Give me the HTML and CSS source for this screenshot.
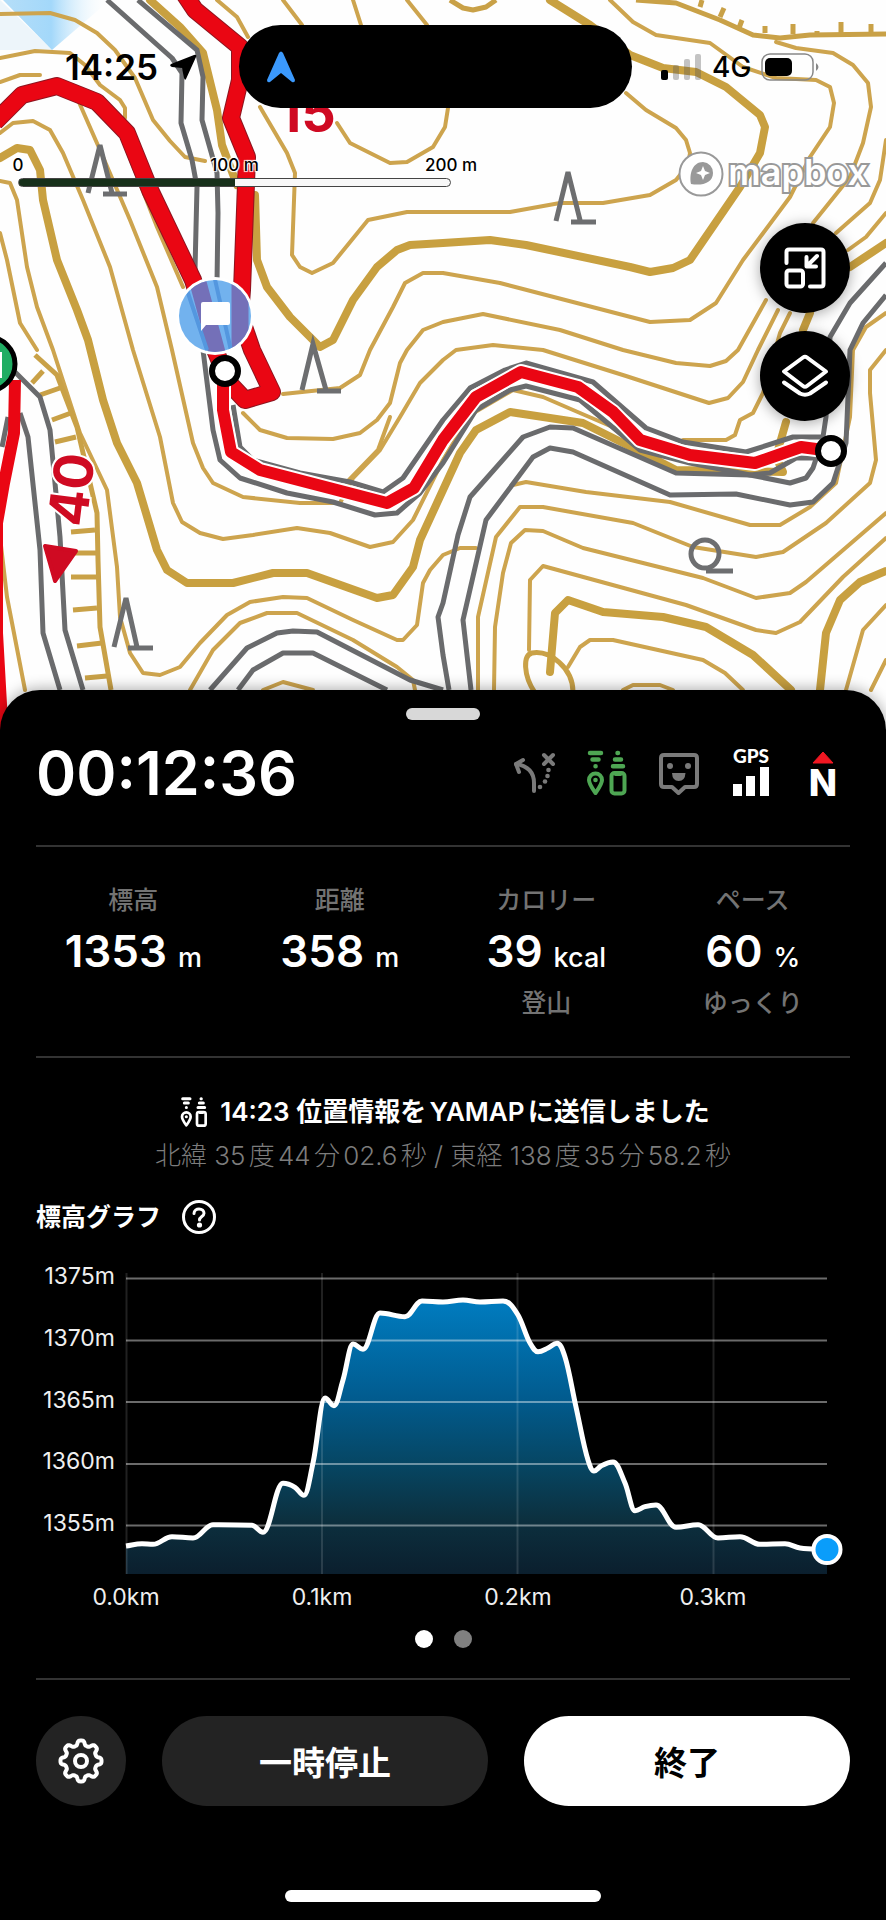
FILE: index.html
```html
<!DOCTYPE html>
<html lang="ja">
<head>
<meta charset="utf-8">
<meta name="viewport" content="width=device-width, initial-scale=1">
<title>活動記録</title>
<link rel="stylesheet" href="styles.css">
</head>
<body>
<main class="screen">
  <section class="map" aria-label="地図">
    <svg class="map-canvas" viewBox="0 0 886 730" preserveAspectRatio="xMidYMin slice" aria-hidden="true">
      <defs>
        <linearGradient id="haze" x1="0" y1="0" x2="1" y2="0">
          <stop offset="0" stop-color="#b5def8"/><stop offset="0.45" stop-color="#a3d8fa"/><stop offset="1" stop-color="#fff" stop-opacity="0"/>
        </linearGradient>
        <clipPath id="pinClip"><circle cx="215" cy="316" r="36"/></clipPath>
      </defs>
      <path d="M0 0 52 50 0 50Z" fill="#edf5fa"/>
      <path d="M3 0H110L52 50Z" fill="url(#haze)"/>
      <g class="contour">
        <path d="M0 14 50 13 75 20 97 33 115 50 135 78 153 120 170 141 185 157 205 161"/>
        <path d="M0 58 35 51 70 53 85 65 100 85 120 100 125 108 125 118"/>
        <path d="M0 82 20 75 40 75"/>
        <path d="M127 150 157 227 183 287"/>
        <path d="M78 100 100 150 130 220 157 287 172 350 193 443 203 468 213 483 243 497 300 503 340 503 353 478 380 450 400 417 420 383 443 360 456 350 493 345 543 350 626 376 709 403 728 398 743 382 758 350 778 310"/>
        <path d="M0 133 13 123 33 121 50 130 63 153 83 200 110 267 133 350 160 437 173 503 182 522 200 533 223 539 253 535 297 528 330 533 370 547 393 542 413 520 443 460 470 415 513 390 543 397 580 413 636 437"/>
        <path d="M0 181 10 183 17 200 27 267 37 307 53 350 80 433 107 490 117 567 120 617 130 653 143 673 160 675 180 667 200 643 227 615 250 602 283 597 307 598 353 620 397 640 403 640 417 625 423 583 430 570 443 555 460 548 476 548"/>
        <path d="M0 233 7 260 20 323 37 350"/>
        <path d="M0 537 7 597 25 690"/>
        <path d="M190 690 213 650 240 623 267 613 297 613 353 640 397 667 413 680 415 690"/>
        <path d="M263 690 283 682 313 690"/>
        <path d="M217 0 237 17 248 37M283 0 302 25M353 0 361 25M407 0 427 25"/>
        <path d="M337 123 350 143 390 163 407 162 433 147 445 127 448 108"/>
        <path d="M260 107 287 153 295 173 292 255 300 267 312 273 333 263 368 220 407 212 510 212 560 203 603 203 650 195 676 180 688 165 690 153 686 140 676 128 646 110 626 93"/>
        <path d="M283 394 340 388 360 375 370 350 393 307 405 283 423 273 443 273 500 283 650 322 690 320 716 303 743 260 790 197 810 157 830 127 834 103 830 87 816 80 776 78 743 67 710 43 656 35 633 22 610 0"/>
        <path d="M243 413 260 430 287 438 333 439 360 433 377 420 390 403 400 363 407 350 423 330 443 322 483 314 560 330 623 350 676 363 710 366 726 361 738 350 766 300"/>
        <path d="M776 42 796 48 833 53 853 65 868 83 871 107 863 143 850 177 813 223"/>
        <path d="M886 140 880 180 870 203 836 233M886 213 866 237 848 250"/>
        <path d="M347 482 378 450 390 417"/>
        <path d="M683 440 726 440 735 435 740 420 753 413 763 393 780 333 790 313"/>
        <path d="M886 313 866 327 853 350 850 417 836 483 810 507 780 525 750 525 670 502 586 492 526 482 513 485"/>
        <path d="M478 690 478 617 496 537 520 507 543 507 633 523 693 547 756 557 783 552 826 523 870 483 876 460 870 393 870 370 886 350"/>
        <path d="M494 690 495 627 503 573 511 543 525 530 543 531 583 548 703 578 756 598 790 593 806 582 886 513"/>
        <path d="M529 650 530 580 543 566 686 605 756 630 776 633 800 622 843 577 886 538"/>
        <path d="M568 667 580 647 590 640 613 640 703 660 725 673 743 690M623 690 633 685 660 685 673 690"/>
        <path d="M846 690 863 630 886 605M871 690 886 660"/>
      </g>
      <g class="contour contour-cliff">
        <path d="M636 0 676 3 720 20 753 35 780 38 810 35 886 34M450 0 463 8 473 10 486 7 496 0"/>
        <path d="M702 0 700 7M724 8 720 17M742 20 739 28M765 26V33M793 24V34M817 31V35M841 22V34M871 24V34"/>
        <path d="M35 355 57 375 77 427 97 513 98 560 100 627 111 690"/>
        <path d="M32 383 43 371M40 395 60 388M52 420 71 413M55 442 76 437M71 532 95 530M75 553H97M71 577H97M73 610 97 608M77 646 102 643M85 678 107 676"/>
        <path d="M535 693C523 675 523 655 532 653C550 650 573 668 573 692"/>
      </g>
      <g class="contour contour-index">
        <path d="M150 0 180 27 203 53 217 110 222 145 237 185"/>
        <path d="M550 0 590 25 630 55 663 68 696 72 726 87 760 115 765 127 760 153 740 187 690 260 673 268 650 272 630 267 526 245 490 240 443 243 410 245 397 250 377 267 353 300 333 340 320 347 290 317 267 287 257 260 255 195"/>
        <path d="M0 158 17 148 30 150 40 170 43 200 57 260 77 310 88 340 103 400 117 443 137 483 157 550 167 570 187 583 233 583 273 573 307 573 377 598 393 595 413 567 420 540 443 490 460 453 476 430 510 412 583 423 643 453 676 470 783 472 776 457 786 422"/>
        <path d="M803 330 810 313M850 267 886 243"/>
        <path d="M550 672 555 613 568 600 603 612 663 617 706 627 753 655 791 690"/>
        <path d="M820 690 826 633 840 600 860 582 886 571"/>
      </g>
      <g class="road">
        <path d="M107 0 172 58 182 73 181 123 192 160 197 187 195 270"/>
        <path d="M138 0 197 50 203 77 202 120 217 173 218 213 217 283"/>
        <path d="M203 350 213 430 220 460 240 478 287 493 333 502 375 515 397 513 420 493 443 463 476 410 510 390 526 386 580 400 640 450 690 463 750 475 770 473 796 458 820 458"/>
        <path d="M233 405 240 447 253 460 300 473 350 482 383 492 403 478 443 420 470 388 505 370 526 363 593 382 646 428 683 442 746 452 793 437 823 437 826 417 830 337 850 303 886 263"/>
        <path d="M449 690 443 655 438 617 443 603 458 535 470 497 523 437 550 427 573 428 676 473 750 475 790 483 806 478 813 468 817 456"/>
        <path d="M471 690 463 620 486 520 533 457 550 448 573 452 670 495 736 494 790 505 813 502 833 483 846 443 850 350 863 323 886 295"/>
        <path d="M210 690 247 648 277 633 293 631 317 632 410 680 443 690M238 690 253 670 283 653 313 653 387 690"/>
        <path d="M15 372 40 397 50 430 55 483 60 537 65 630 83 690M20 413 28 437 40 550 43 633 60 690M2 447 8 417"/>
      </g>
      <g class="symbol">
        <path d="M88 193 100 145 112 193M103 194H127M556 221 568 172 580 220M571 222H596M302 390 313 344 326 390M317 391H341M114 647 126 598 137 647M128 648H153M706 571H733"/>
        <circle cx="705" cy="554" r="14"/>
      </g>
      <g class="trail trail-edge">
        <path d="M-5 122 22 95 57 86 97 102 127 133 150 190 193 280 213 345 229 383 245 400 272 392 252 350 240 315 242 290 247 157 231 118 240 80 240 47 195 10 183-8"/>
      </g>
      <g class="trail">
        <path d="M-5 122 22 95 57 86 97 102 127 133 150 190 193 280 213 345 229 383 245 400 272 392 252 350 240 315 242 290 247 157 231 118 240 80 240 47 195 10 183-8"/>
      </g>
      <g class="trail-gap"><path d="M223 371V410L231 452 260 470 387 503 414 488 443 440 476 397 521 372 578 387 613 412 640 440 690 455 755 463 801 447 831 451"/></g>
      <g class="trail trail-thin">
        <path d="M223 371V410L231 452 260 470 387 503 414 488 443 440 476 397 521 372 578 387 613 412 640 440 690 455 755 463 801 447 831 451"/>
        <path d="M15 380 14 433 4 483-3 523-3 633 3 740"/>
      </g>
      <g class="map-label">
        <text x="278" y="132">15</text>
        <text transform="translate(86 528) rotate(-83)">40</text>
      </g>
      <path class="map-arrow" d="M45 546 76 551 55 581Z"/>
      <g>
        <circle cx="215" cy="316" r="39" fill="#fff"/>
        <circle cx="215" cy="316" r="36" fill="#72b2ee"/>
        <g clip-path="url(#pinClip)" fill="none">
          <path d="M196 275 219 360M240 275V360" stroke="#7470b8" stroke-width="17"/>
          <path d="M187 290 207 350M214 275 232 355" stroke="#5497df" stroke-width="4"/>
        </g>
        <path d="M203 302H228Q230 302 230 304V323Q230 325 228 325H206L201 331V304Q201 302 203 302Z" fill="#fff"/>
      </g>
      <g fill="#fff" stroke="#000" stroke-width="6">
        <circle cx="225" cy="371" r="13"/>
        <circle cx="831" cy="451" r="13"/>
      </g>
      <circle cx="-12" cy="364" r="27" fill="#20ad63" stroke="#000" stroke-width="5"/>
      <path d="M-8 352H2V378H-8Z" fill="#fff"/>
    </svg>

    <div class="map-ui">
      <div class="status">
        <div class="status-left">
          <span class="clock">14:25</span>
          <svg width="27" height="26" viewBox="0 0 27 26" aria-hidden="true"><path d="M1 10 24 1Q27 0 26 3L16 25Q15 27 14 24L12 14 2 13Q-1 12 1 10Z"/></svg>
        </div>
        <div class="island">
          <svg width="30" height="32" viewBox="0 0 30 32" aria-hidden="true"><path d="M13 2Q15-1 17 2L29 29Q29 32 26 31L15 22 4 31Q1 32 1 29Z" fill="#3b99fc"/></svg>
        </div>
        <div class="status-right">
          <svg width="41" height="26" viewBox="0 0 41 26" aria-hidden="true">
            <rect y="16" width="7" height="10" rx="2"/>
            <g fill="#555" fill-opacity="0.35"><rect x="12" y="11" width="6" height="15" rx="2"/><rect x="23" y="5" width="6" height="21" rx="2"/><rect x="34" width="6" height="26" rx="2"/></g>
          </svg>
          <span class="network">4G</span>
          <svg width="58" height="28" viewBox="0 0 58 28" aria-hidden="true">
            <rect x="1" y="1" width="51" height="26" rx="8" fill="none" stroke="#888" stroke-width="1.5"/>
            <rect x="4" y="5" width="27" height="18" rx="5"/>
            <path d="M55 10Q60 14 55 18Z" fill="#888"/>
          </svg>
        </div>
      </div>

      <div class="map-info">
        <div class="scale">
          <div class="scale-labels"><span>0</span><span>100 m</span><span>200 m</span></div>
          <div class="scale-bar"></div>
        </div>
        <a class="mapbox" href="#mapbox">
          <svg width="46" height="46" viewBox="0 0 46 46" aria-hidden="true">
            <circle cx="23" cy="23" r="21.500" fill="#fff" stroke="#999" stroke-width="2"/>
            <path d="M13 33C11 22 15 11 25 11A10.500 10.500 0 0 1 35 22C35 32 24 35 13 33Z" fill="#999"/>
            <path d="M25 15 27 20 32 22 27 24 25 29 23 24 18 22 23 20Z" fill="#fff"/>
          </svg>
          <span>mapbox</span>
        </a>
      </div>

      <div class="map-tools">
        <button class="tool" type="button" aria-label="縮小表示">
          <svg viewBox="0 0 90 90" aria-hidden="true"><path d="M26.500 40V29Q26.500 26.500 29 26.500H61Q63.500 26.500 63.500 29V61Q63.500 63.500 61 63.500H50"/><rect x="26.500" y="47.500" width="16.500" height="16" rx="2.500"/><path d="M57 33 47 43M46.500 34V43.500H56"/></svg>
        </button>
        <button class="tool" type="button" aria-label="レイヤー">
          <svg viewBox="0 0 90 90" aria-hidden="true"><path d="M43 26.500Q45 25 47 26.500L66 40.500 47 55Q45 56.500 43 55L24 40.500Z"/><path d="M24 51.500 40 62.500Q45 65 50 62.500L66 51.500"/></svg>
        </button>
      </div>
    </div>
  </section>

  <section class="sheet">
    <div class="handle"></div>

    <header class="sheet-head">
      <h1 class="timer">00:12:36</h1>
      <div class="indicators">
        <svg viewBox="0 0 54 54" class="muted" role="img" aria-label="ルート外れ警告">
          <g fill="none" stroke="currentColor" stroke-width="4" stroke-linecap="round" stroke-linejoin="round"><path d="M26 45V37C26 26 20 20 8 18"/><path d="M15 14 8 18 11 26" /><path d="M36 9 45 18M45 9 36 18"/></g>
          <g fill="currentColor"><circle cx="40.500" cy="24" r="2.300"/><circle cx="39.500" cy="30" r="2.300"/><circle cx="37" cy="35.500" r="2.300"/><circle cx="32" cy="41" r="2.300"/></g>
        </svg>
        <svg viewBox="0 0 54 54" class="ok" role="img" aria-label="位置情報の送信"><use href="#sync"/></svg>
        <svg viewBox="0 0 54 54" class="muted" role="img" aria-label="フィールドメモ">
          <path d="M12 9H42Q45 9 45 12V38Q45 41 42 41H33L26.500 47 20 41H12Q9 41 9 38V12Q9 9 12 9Z" fill="none" stroke="currentColor" stroke-width="4" stroke-linejoin="round"/>
          <g fill="currentColor"><circle cx="18" cy="20" r="3"/><circle cx="36" cy="20" r="3"/><path d="M20 27H33.500Q33 35 26.700 35T20 27Z"/></g>
        </svg>
        <svg viewBox="0 0 54 54" role="img" aria-label="GPS">
          <text class="gps" x="27" y="17" text-anchor="middle">GPS</text>
          <path d="M9 38H18V50H9ZM22 30H31V50H22ZM36 21H45V50H36Z" fill="#fff"/>
        </svg>
        <svg viewBox="0 0 54 54" role="img" aria-label="北">
          <path d="M27 6 37 17H17Z" fill="#f01722" stroke="#f01722" stroke-linejoin="round"/>
          <text class="north" x="27" y="50" text-anchor="middle">N</text>
        </svg>
      </div>
    </header>

    <dl class="stats">
      <div class="stat"><dt>標高</dt><dd class="value">1353 <small>m</small></dd></div>
      <div class="stat"><dt>距離</dt><dd class="value">358 <small>m</small></dd></div>
      <div class="stat"><dt>カロリー</dt><dd class="value">39 <small>kcal</small></dd><dd class="note">登山</dd></div>
      <div class="stat"><dt>ペース</dt><dd class="value">60 <small>%</small></dd><dd class="note">ゆっくり</dd></div>
    </dl>

    <div class="sent">
      <p class="sent-title">
        <svg width="36" height="36" viewBox="0 0 54 54" aria-hidden="true">
          <g id="sync">
            <g fill="none" stroke="currentColor" stroke-width="4.500" stroke-linecap="round">
              <path d="M10 7H21M12.500 13.500H18.500M15.500 20.200H15.600M37.500 7H38M35 13.500H41M33 20.200H43"/>
              <path d="M15.500 47C12 42 9 38 9 34A6.500 6.500 0 0 1 22 34C22 38 19 42 15.500 47Z" stroke-width="4" stroke-linejoin="round"/>
              <rect x="31.500" y="27" width="13" height="20.500" rx="3" stroke-width="4"/>
              <path d="M35.500 28.500H40.500" stroke-width="3"/>
            </g>
            <circle cx="15.500" cy="34" r="2.300" fill="currentColor"/>
          </g>
        </svg>
        <span>14:23 位置情報をYAMAPに送信しました</span>
      </p>
      <p class="coords">北緯 35度44分02.6秒 / 東経 138度35分58.2秒</p>
    </div>

    <div class="graph-head">
      <h2>標高グラフ</h2>
      <button class="help" type="button" aria-label="ヘルプ">
        <svg viewBox="0 0 34 34" aria-hidden="true"><circle cx="17" cy="17" r="15.500"/><path d="M12 13.500C12 10.500 14.500 9 17 9C20 9 22 10.800 22 13.300C22 16.500 17.500 16.500 17.500 20"/><circle class="dot" cx="17.500" cy="25" r="2.600"/></svg>
      </button>
    </div>

    <svg class="graph" viewBox="36 1262 814 350" role="img" aria-label="標高グラフ">
      <defs>
        <linearGradient id="area" gradientUnits="userSpaceOnUse" x1="0" y1="1300" x2="0" y2="1574">
          <stop offset="0" stop-color="#007cc0"/><stop offset="0.350" stop-color="#015c90"/><stop offset="0.600" stop-color="#064663"/><stop offset="0.800" stop-color="#0c303f"/><stop offset="1" stop-color="#0b1f2e"/>
        </linearGradient>
      </defs>
      <path id="graph-area" fill="url(#area)"/>
      <path class="grid-x" d="M126.500 1273V1574M322 1273V1574M517.500 1273V1574M713.500 1273V1574"/>
      <path class="grid-y" d="M126 1278.500H827M126 1340.500H827M126 1402H827M126 1464H827M126 1525.500H827"/>
      <path id="graph-line" class="graph-line"/>
      <circle cx="827" cy="1549.500" r="13.500" fill="#0a9dfa" stroke="#fff" stroke-width="4"/>
      <g class="axis" text-anchor="end">
        <text x="115" y="1284">1375m</text><text x="115" y="1346">1370m</text><text x="115" y="1408">1365m</text><text x="115" y="1469">1360m</text><text x="115" y="1531">1355m</text>
      </g>
      <g class="axis" text-anchor="middle">
        <text x="126" y="1605">0.0km</text><text x="322" y="1605">0.1km</text><text x="518" y="1605">0.2km</text><text x="713" y="1605">0.3km</text>
      </g>
    </svg>

    <div class="pager"><span class="current"></span><span></span></div>

    <div class="actions">
      <button class="settings" type="button" aria-label="設定">
        <svg viewBox="0 0 48 48" aria-hidden="true"><path id="gear"/><circle cx="24" cy="24" r="6"/></svg>
      </button>
      <button class="pause" type="button">一時停止</button>
      <button class="finish" type="button">終了</button>
    </div>

    <div class="home-bar"></div>
  </section>
</main>
<script src="graph.js"></script>
</body>
</html>
```

FILE: styles.css
```css
* { box-sizing: border-box; }

body {
  margin: 0;
  background: #000;
  color: #fff;
  font-family: Inter, "Noto Sans CJK JP", sans-serif;
}

h1, h2, p, dl, dd { margin: 0; }
button { border: 0; padding: 0; font: inherit; cursor: pointer; }
a { color: inherit; text-decoration: none; }
svg { display: block; flex: none; }

/* Map */
.map { position: relative; min-height: 730px; background: #fefefe; overflow: hidden; }
.map-canvas { position: absolute; inset: 0; width: 100%; height: 100%; }
.map-ui { position: relative; padding-top: 25px; color: #000; }

.contour { fill: none; stroke: #cda44e; stroke-width: 4; stroke-linejoin: round; stroke-linecap: round; }
.contour-cliff { stroke: #c9a147; stroke-width: 5; stroke-linecap: butt; }
.contour-index { stroke: #c8a040; stroke-width: 8; }
.road { fill: none; stroke: #6a6b6d; stroke-width: 5; stroke-linejoin: round; }
.symbol { fill: none; stroke: #6d6e70; stroke-width: 5; }
.trail { fill: none; stroke: #ea0613; stroke-width: 16; stroke-linejoin: round; }
.trail-edge { stroke: #8d1520; stroke-width: 18; }
.trail-gap { fill: none; stroke: #fff; stroke-width: 16; stroke-linejoin: round; }
.trail-thin { stroke-width: 12; }
.map-label { font-size: 54px; font-weight: 700; fill: #cf0a22; stroke: #fff; stroke-width: 4; paint-order: stroke; }
.map-arrow { fill: #cf0a22; stroke: #cf0a22; stroke-width: 4; stroke-linejoin: round; }

.status { display: grid; grid-template-columns: 239fr 393px 254fr; align-items: center; }
.status-left { display: flex; align-items: center; gap: 12px; padding-left: 65px; }
.clock { font-size: 35px; font-weight: 600; line-height: 40px; }
.island { display: flex; align-items: center; height: 83px; padding-left: 27px; border-radius: 42px; background: #000; }
.status-right { display: flex; align-items: center; gap: 10px; padding-left: 29px; }
.network { font-size: 28px; font-weight: 500; line-height: 32px; }

.map-info { display: flex; justify-content: space-between; margin-top: 44px; padding: 0 18px; }
.scale { flex: 0 1 433px; padding-top: 2px; }
.scale-labels { display: flex; justify-content: space-between; font-size: 17px; font-weight: 500; line-height: 22px; }
.scale-labels span { display: flex; justify-content: center; width: 0; white-space: nowrap; text-shadow: 1px 1px 1px #fff, -1px -1px 1px #fff, 1px -1px 1px #fff, -1px 1px 1px #fff; }
.scale-bar { height: 9px; margin-top: 2px; border: 1px solid #444; border-radius: 5px; background: linear-gradient(90deg, #17301a 50%, #f8f8f8 50%); }
.mapbox { display: flex; align-items: center; gap: 4px; height: 44px; color: #fff; font-size: 36px; font-weight: 600; line-height: 40px; }
.mapbox span { padding-bottom: 4px; -webkit-text-stroke: 4px #999; paint-order: stroke; }

.map-tools { display: flex; flex-direction: column; align-items: flex-end; gap: 18px; margin-top: 27px; padding-right: 36px; }
.tool { width: 90px; height: 90px; border-radius: 50%; background: #000; box-shadow: 0 2px 14px rgba(0, 0, 0, 0.35); }
.tool svg { width: 100%; fill: none; stroke: #fff; stroke-width: 4; stroke-linecap: round; stroke-linejoin: round; }

/* Activity sheet */
.sheet {
  position: relative;
  display: flex;
  flex-direction: column;
  margin-top: -40px;
  padding: 18px 36px;
  border-radius: 40px 40px 0 0;
  background: #000;
  box-shadow: 0 -2px 14px rgba(0, 0, 0, 0.3);
}
.handle { align-self: center; width: 74px; height: 12px; border-radius: 6px; background: #d8d8d8; }

.sheet-head { display: flex; align-items: center; justify-content: space-between; margin-top: 26px; padding-bottom: 45px; border-bottom: 2px solid #333; }
.timer { font-size: 61px; font-weight: 600; line-height: 54px; }
.indicators { display: flex; gap: 18px; }
.indicators svg { width: 54px; height: 54px; overflow: visible; }
.muted { color: #7a7a7a; }
.ok { color: #4ea653; }
.gps { font-family: Lato, Inter, sans-serif; font-size: 19px; font-weight: 900; fill: #fff; }
.north { font-size: 37px; font-weight: 800; fill: #fff; }

.stats { display: grid; grid-template-columns: repeat(4, 1fr); margin: 0 -6px; padding: 38px 0; text-align: center; }
.stat dt, .note { color: #737373; font-size: 25px; font-weight: 500; line-height: 30px; }
.value { display: flex; align-items: baseline; justify-content: center; gap: 11px; height: 60px; margin-top: 6px; font-size: 44px; font-weight: 600; line-height: 60px; }
.value small { font-size: 27px; font-weight: 500; line-height: 30px; }
.note { margin-top: 7px; }

.sent { padding-top: 36px; border-top: 2px solid #333; text-align: center; }
.sent-title { display: flex; align-items: center; justify-content: center; gap: 8px; font-size: 26px; font-weight: 600; line-height: 36px; }
.coords { margin-top: 8px; color: #7c7c7c; font-size: 26px; font-weight: 300; line-height: 36px; }
.sent-title, .coords { text-autospace: normal; }

.graph-head { display: flex; align-items: center; gap: 21px; margin-top: 26px; }
.graph-head h2 { font-size: 25px; font-weight: 600; line-height: 34px; }
.help { width: 34px; height: 34px; background: none; }
.help svg { fill: none; stroke: #fff; stroke-width: 3; stroke-linecap: round; }
.help .dot { fill: #fff; stroke: none; }

.graph { width: 100%; margin-top: 28px; overflow: visible; }
.grid-x { fill: none; stroke: #fff; stroke-opacity: 0.13; stroke-width: 2; }
.grid-y { fill: none; stroke: #fff; stroke-opacity: 0.42; stroke-width: 2; }
.graph-line { fill: none; stroke: #fff; stroke-width: 5; stroke-linejoin: round; }
.axis { fill: #efefef; font-size: 23px; }

.pager { display: flex; justify-content: center; gap: 21px; margin-top: 18px; }
.pager span { width: 18px; height: 18px; border-radius: 50%; background: #808080; }
.pager .current { background: #fff; }

.actions { display: flex; gap: 36px; margin-top: 30px; padding-top: 36px; border-top: 2px solid #333; }
.actions button { height: 90px; border-radius: 45px; font-size: 33px; font-weight: 600; }
.settings { flex: 0 0 90px; display: flex; align-items: center; justify-content: center; }
.settings svg { width: 48px; height: 48px; fill: none; stroke: #fff; stroke-width: 4; stroke-linejoin: round; }
.settings, .pause { background: #232323; color: #fff; }
.pause, .finish { flex: 1; }
.finish { background: #fff; color: #000; }

.home-bar { align-self: center; width: 316px; height: 12px; margin-top: 84px; border-radius: 6px; background: #fff; }
```

FILE: graph.js
```js
const points = [
  [126, 1546], [142, 1543.7], [153, 1544.3], [172, 1536.7], [193, 1538], [213, 1524.7], [252, 1525.3],
  [263, 1532.3], [283, 1483.3], [295, 1487.3], [304, 1495.3], [313, 1463], [325, 1398], [334, 1405.7],
  [343, 1380], [353, 1344], [363, 1349.3], [380, 1313], [405, 1316.7], [422, 1301], [443, 1302],
  [463, 1300], [480, 1302], [503, 1301], [518, 1315], [530, 1343], [538, 1351.7], [548, 1348],
  [557, 1343.3], [565, 1357], [576, 1407], [588, 1460], [594, 1471], [601, 1466], [613, 1462],
  [625, 1483], [635, 1510.7], [645, 1506.7], [656, 1505], [676, 1527.3], [698, 1524.7], [718, 1538],
  [740, 1536.7], [760, 1544.3], [785, 1543.7], [800, 1548], [827, 1549.3]
];

// Monotone cubic interpolation: flat at every local peak and dip.
function smoothPath(p) {
  const slope = [];
  for (let i = 0; i < p.length - 1; i++) {
    slope.push((p[i + 1][1] - p[i][1]) / (p[i + 1][0] - p[i][0]));
  }
  const tangent = p.map((_, i) => {
    if (i === 0) return slope[0];
    if (i === p.length - 1) return slope[i - 1];
    const a = slope[i - 1], b = slope[i];
    if (a * b <= 0) return 0;
    return Math.sign(a) * Math.min(Math.abs(a + b) / 2, 3 * Math.abs(a), 3 * Math.abs(b));
  });
  let d = `M${p[0][0]} ${p[0][1]}`;
  for (let i = 0; i < p.length - 1; i++) {
    const h = (p[i + 1][0] - p[i][0]) / 2.6;
    d += `C${p[i][0] + h} ${p[i][1] + tangent[i] * h} ${p[i + 1][0] - h} ${p[i + 1][1] - tangent[i + 1] * h} ${p[i + 1][0]} ${p[i + 1][1]}`;
  }
  return d;
}

const line = smoothPath(points);
document.getElementById("graph-line").setAttribute("d", line);
document.getElementById("graph-area").setAttribute("d", `${line}V1574H126Z`);

// Gear outline with eight rounded teeth.
let gear = "";
for (let i = 0; i < 160; i++) {
  const t = i / 160 * Math.PI * 2;
  const r = 18.2 + 2.4 * Math.tanh(2 * Math.cos(8 * t));
  gear += `${i ? "L" : "M"}${(24 + r * Math.sin(t)).toFixed(2)} ${(24 - r * Math.cos(t)).toFixed(2)}`;
}
document.getElementById("gear").setAttribute("d", gear + "Z");
```
